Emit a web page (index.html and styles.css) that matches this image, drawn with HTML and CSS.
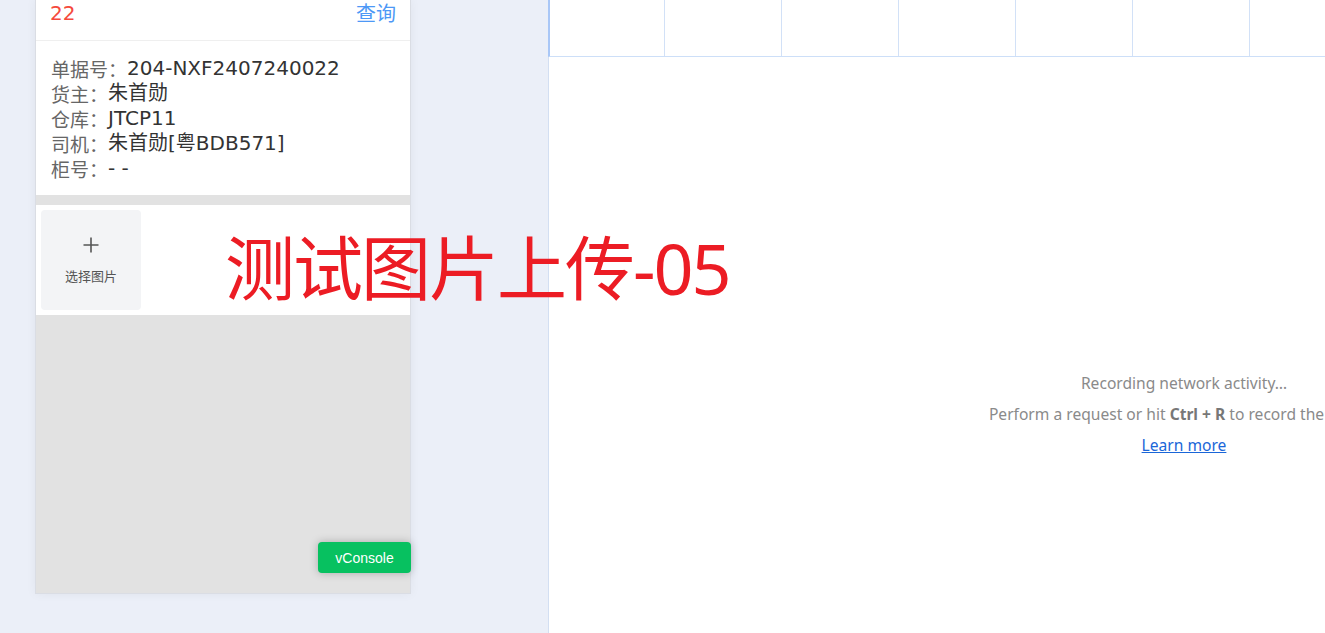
FILE: index.html
```html
<!DOCTYPE html>
<html lang="zh-CN">
<head>
<meta charset="utf-8">
<title>测试图片上传</title>
<link rel="stylesheet" href="styles.css">
</head>
<body>
<div class="stage">
  <div class="left-area">
    <div class="phone">
      <div class="phone-header">
        <span class="count">22</span>
        <span class="query">查询</span>
      </div>
      <div class="info">
        <div class="row"><span class="label">单据号：</span><span class="value">204-NXF2407240022</span></div>
        <div class="row"><span class="label">货主：</span><span class="value">朱首勋</span></div>
        <div class="row"><span class="label">仓库：</span><span class="value">JTCP11</span></div>
        <div class="row"><span class="label">司机：</span><span class="value">朱首勋[粤BDB571]</span></div>
        <div class="row"><span class="label">柜号：</span><span class="value">- -</span></div>
      </div>
      <div class="upload">
        <div class="upload-box">
          <svg class="plus" width="16" height="16" viewBox="0 0 16 16"><path d="M8 0.5V15.5M0.5 8H15.5" stroke="#555" stroke-width="1.6" fill="none"/></svg>
          <span class="upload-text">选择图片</span>
        </div>
      </div>
      <button class="vconsole">vConsole</button>
    </div>
  </div>
  <div class="devtools">
    <div class="grid-head">
      <div class="col first"></div>
      <div class="col"></div>
      <div class="col"></div>
      <div class="col"></div>
      <div class="col"></div>
      <div class="col"></div>
      <div class="col"></div>
    </div>
    <div class="empty">
      <p class="msg">Recording network activity…</p>
      <p class="msg">Perform a request or hit <b>Ctrl + R</b> to record the reload.</p>
      <p class="msg"><a class="learn" href="#">Learn more</a></p>
    </div>
  </div>
  <div class="watermark">测试图片上传-05</div>
</div>
</body>
</html>
```
FILE: styles.css
```css
html, body {
  margin: 0;
  padding: 0;
  width: 1325px;
  height: 633px;
  overflow: hidden;
  background: #ebeff8;
}
.stage {
  position: relative;
  display: flex;
  width: 1325px;
  height: 633px;
  overflow: hidden;
}
.left-area {
  flex: none;
  width: 548px;
  padding-left: 35px;
  box-sizing: border-box;
}
.phone {
  position: relative;
  width: 376px;
  height: 594px;
  box-sizing: border-box;
  background: #e2e2e2;
  border: 1px solid #dadde4;
  border-top: none;
  box-shadow: 0 0 10px rgba(0, 0, 0, 0.05);
  font-family: "DejaVu Sans", "Noto Sans CJK SC", sans-serif;
}
.phone-header {
  height: 39px;
  background: #fff;
  border-bottom: 1px solid #efefef;
  display: flex;
  justify-content: space-between;
  align-items: flex-start;
  padding: 1px 14px 0;
  box-sizing: content-box;
  font-size: 20px;
}
.phone-header span {
  display: block;
  height: 24px;
  line-height: 24px;
}
.count { color: #f5493c; }
.query { color: #4d98f6; font-family: "Noto Sans CJK SC", sans-serif; }
.info {
  background: #fff;
  padding: 15px 15px 14px;
  font-size: 20px;
}
.row {
  display: flex;
  align-items: center;
  height: 25px;
  white-space: nowrap;
}
.row span { display: block; line-height: 25px; height: 25px; }
.label { color: #666; font-family: "Noto Sans CJK SC", sans-serif; font-size: 19px; }
.value { color: #333; }
.upload {
  margin-top: 10px;
  background: #fff;
  padding: 5px 5px;
  height: 110px;
  box-sizing: border-box;
}
.upload-box {
  width: 100px;
  height: 100px;
  background: #f3f4f6;
  border-radius: 4px;
  display: flex;
  flex-direction: column;
  align-items: center;
  padding-top: 27px;
  box-sizing: border-box;
}
.plus { display: block; }
.upload-text {
  margin-top: 15px;
  font-family: "Noto Sans CJK SC", sans-serif;
  font-size: 13px;
  color: #555;
  line-height: 16px;
}
.vconsole {
  position: absolute;
  right: -1px;
  bottom: 20px;
  width: 93px;
  height: 31px;
  border: none;
  border-radius: 4px;
  background: #07c160;
  color: #fff;
  font-family: "Liberation Sans", Arial, sans-serif;
  font-size: 14px;
  box-shadow: 0 0 8px rgba(0, 0, 0, 0.25);
  padding: 0;
}
.devtools {
  flex: none;
  width: 1270px;
  height: 633px;
  background: #fff;
  border-left: 1px solid #d3dff2;
}
.grid-head {
  display: flex;
  height: 56px;
  margin-left: -1px;
  border-left: 2px solid #a9c7f7;
  border-bottom: 1px solid #cddff8;
}
.col {
  flex: none;
  width: 116px;
  border-right: 1px solid #d2e1f7;
}
.col.first { width: 114px; }
.empty {
  padding-top: 311px;
  text-align: center;
  font-family: "Noto Sans", sans-serif;
  font-size: 15.6px;
  color: #8a8a8a;
}
.msg {
  margin: 0;
  line-height: 31px;
  white-space: nowrap;
}
.msg b { color: #777; }
.learn { color: #1a66d8; }
.watermark {
  position: absolute;
  left: 225px;
  top: 228px;
  font-family: "Noto Sans", "Noto Sans CJK SC", sans-serif;
  font-size: 70px;
  letter-spacing: -2px;
  line-height: 80px;
  color: #ec1c24;
  white-space: nowrap;
}
```
